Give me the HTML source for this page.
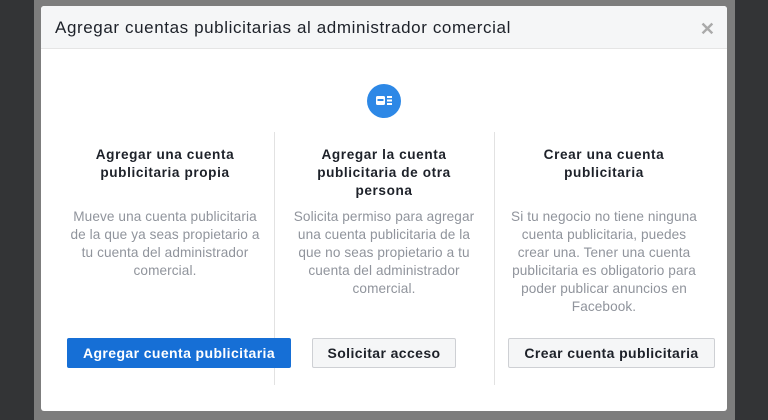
<!DOCTYPE html>
<html><head><meta charset="utf-8"><style>
*{margin:0;padding:0;box-sizing:border-box}
body{width:768px;height:420px;overflow:hidden;background:#7d7d7d;font-family:"Liberation Sans",sans-serif;position:relative}
.dl{position:absolute;left:0;top:0;width:34px;height:420px;background:#333436}
.dr{position:absolute;left:735px;top:0;width:33px;height:420px;background:#333436}
.modal{position:absolute;left:41px;top:6px;width:686px;height:405px;background:#fff;border-radius:3px;overflow:hidden}
.hd{height:43px;background:#f5f6f7;border-bottom:1px solid #e5e5e5;padding:12px 0 0 14px;font-size:17px;color:#1d2129;letter-spacing:.6px}
.x{position:absolute;right:12px;top:13px;font-size:18px;color:#aaa;font-weight:bold}
.ic{position:absolute;left:326px;top:78px;width:34px;height:34px;border-radius:50%;background:#2d88e6}
.div{position:absolute;top:126px;width:1px;height:253px;background:#e2e2e2}
.col{position:absolute;top:140px;width:220px;text-align:center}
.t{font-size:13.6px;font-weight:bold;color:#1d2129;line-height:18px;letter-spacing:.6px;height:62px}
.d{font-size:13.6px;color:#90949c;line-height:18px;letter-spacing:.1px}
.b{position:absolute;top:332px;height:30px;font-size:14px;font-weight:bold;text-align:center;line-height:28px;border-radius:2px;letter-spacing:.4px}
.bb{background:#166fd6;color:#fff;border:1px solid #166fd6}
.bg{background:#f5f6f7;color:#1d2129;border:1px solid #ced0d4}
</style></head><body>
<div class="dl"></div><div class="dr"></div>
<div class="modal">
<div class="hd">Agregar cuentas publicitarias al administrador comercial</div>
<div class="x">✕</div>
<div class="ic"><svg width="34" height="34"><rect x="9" y="12" width="9" height="9" rx="1.5" fill="#fff"/><rect x="10.5" y="15" width="6" height="2" fill="#2d88e6"/><rect x="20" y="12" width="5" height="2" fill="#fff"/><rect x="20" y="15.5" width="5" height="2" fill="#fff"/><rect x="20" y="19" width="5" height="2" fill="#fff"/></svg></div>
<div class="div" style="left:233px"></div>
<div class="div" style="left:453px"></div>
<div class="col" style="left:14px"><div class="t">Agregar una cuenta<br>publicitaria propia</div><div class="d">Mueve una cuenta publicitaria<br>de la que ya seas propietario a<br>tu cuenta del administrador<br>comercial.</div></div>
<div class="col" style="left:233px"><div class="t">Agregar la cuenta<br>publicitaria de otra<br>persona</div><div class="d">Solicita permiso para agregar<br>una cuenta publicitaria de la<br>que no seas propietario a tu<br>cuenta del administrador<br>comercial.</div></div>
<div class="col" style="left:453px"><div class="t">Crear una cuenta<br>publicitaria</div><div class="d">Si tu negocio no tiene ninguna<br>cuenta publicitaria, puedes<br>crear una. Tener una cuenta<br>publicitaria es obligatorio para<br>poder publicar anuncios en<br>Facebook.</div></div>
<div class="b bb" style="left:26px;width:224px">Agregar cuenta publicitaria</div>
<div class="b bg" style="left:271px;width:144px">Solicitar acceso</div>
<div class="b bg" style="left:467px;width:207px">Crear cuenta publicitaria</div>
</div>
</body></html>
